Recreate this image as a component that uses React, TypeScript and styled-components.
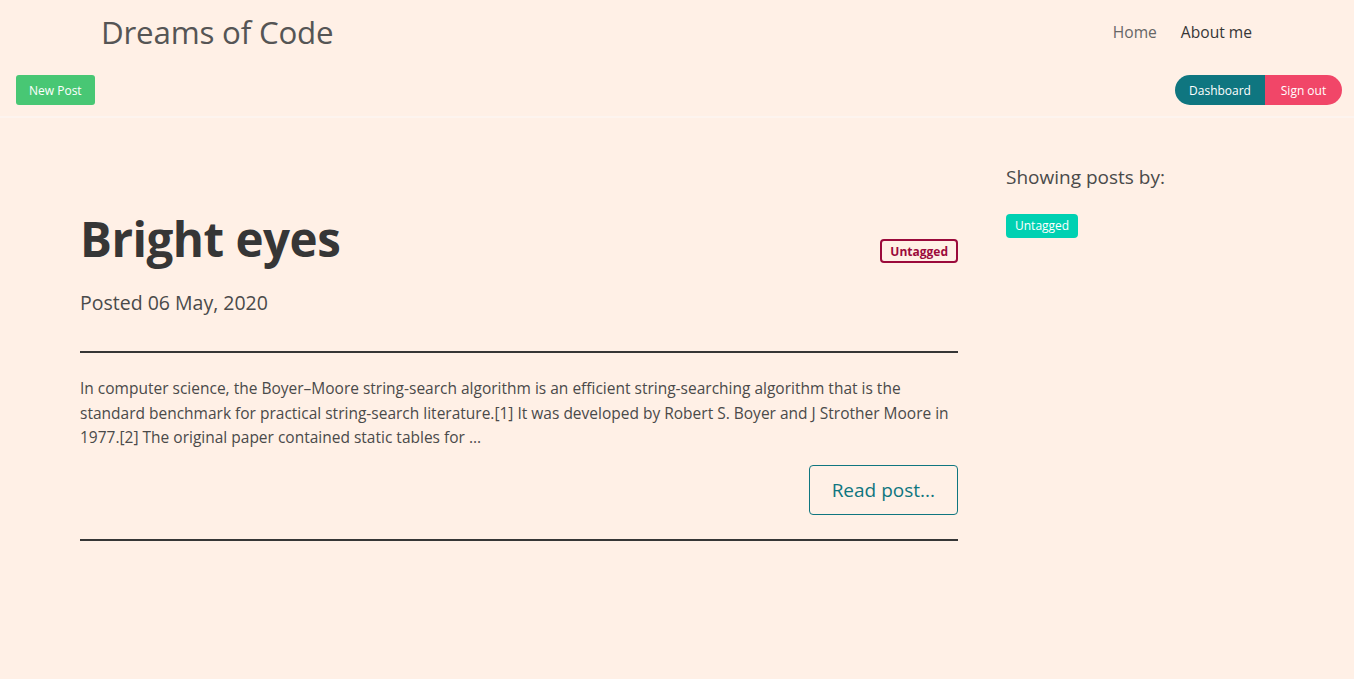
import styled, { createGlobalStyle } from "styled-components";

const GlobalStyle = createGlobalStyle`
  html, body {
    margin: 0;
    padding: 0;
    background-color: #fff0e6;
  }
  body {
    font-family: "Open Sans", "Noto Sans", sans-serif;
    color: #4a4a4a;
  }
  * {
    box-sizing: border-box;
  }
`;

const Page = styled.div`
  min-height: 679px;
  background-color: #fff0e6;
`;

// top bar with the site name and links
const Header = styled.header`
  border-bottom: 2px solid #fdf4ef;
`;

const TopRow = styled.div`
  height: 66px;
  display: flex;
  align-items: center;
  justify-content: space-between;
  padding: 0 102px 3px 101px;
`;

const Brand = styled.h1`
  margin: 0;
  font-size: 31.3px;
  font-weight: 400;
  color: #555555;
  letter-spacing: -0.2px;
`;

const Nav = styled.nav`
  display: flex;
  gap: 24px;
  font-size: 15.6px;
`;

const NavLink = styled.a<{ active?: boolean }>`
  color: ${(props) => (props.active ? "#363636" : "#666666")};
  text-decoration: none;
`;

const ToolRow = styled.div`
  height: 50px;
  display: flex;
  align-items: flex-start;
  justify-content: space-between;
  padding: 9px 12px 0 16px;
`;

const SmallButton = styled.button<{ bg: string }>`
  height: 30px;
  border: none;
  color: #fff;
  background-color: ${(props) => props.bg};
  font-family: inherit;
  font-size: 12px;
  padding: 0 13px;
  border-radius: 3px;
`;

const Pill = styled.div`
  display: flex;
  border-radius: 15px;
  overflow: hidden;
`;

const PillButton = styled(SmallButton)`
  border-radius: 0;
  padding: 0 14px;
  min-width: ${(props) => (props.bg === "#0f7680" ? "90px" : "77px")};
`;

// post list and side filter
const Body = styled.main`
  display: flex;
  padding: 0 0 0 80px;
  gap: 48px;
`;

const Posts = styled.section`
  width: 878px;
  padding-top: 91px;
`;

const PostHead = styled.div`
  display: flex;
  justify-content: space-between;
  align-items: flex-end;
`;

const PostTitle = styled.h2`
  margin: 0;
  font-size: 47.5px;
  line-height: 60px;
  font-weight: 700;
  color: #363636;
  letter-spacing: -0.5px;
`;

const Tag = styled.span<{ outlined?: boolean }>`
  display: inline-flex;
  align-items: center;
  height: 24px;
  padding: 0 ${(props) => (props.outlined ? "8px" : "9px")};
  border-radius: 4px;
  font-size: 12px;
  font-weight: ${(props) => (props.outlined ? 700 : 400)};
  color: ${(props) => (props.outlined ? "#9b0a3b" : "#fff")};
  background-color: ${(props) => (props.outlined ? "transparent" : "#00d1b2")};
  border: ${(props) => (props.outlined ? "2px solid #9b0a3b" : "none")};
  margin-bottom: ${(props) => (props.outlined ? "6px" : "0")};
`;

const PostedDate = styled.p`
  margin: 20px 0 0;
  font-size: 19.5px;
  color: #4a4a4a;
`;

const Rule = styled.hr`
  margin: 0;
  border: none;
  border-top: 2px solid #363636;
`;

const FirstRule = styled(Rule)`
  margin-top: 35px;
`;

const Excerpt = styled.p`
  margin: 23px 0 0;
  font-size: 15.5px;
  line-height: 24.5px;
  color: #4a4a4a;
`;

const ReadRow = styled.div`
  display: flex;
  justify-content: flex-end;
  margin: 15px 0 24px;
`;

const ReadButton = styled.button`
  height: 50px;
  padding: 0 22px;
  border: 1px solid #0f7680;
  border-radius: 4px;
  background: transparent;
  color: #0f7680;
  font-family: inherit;
  font-size: 19px;
`;

const Side = styled.aside`
  padding-top: 46px;
`;

const SideTitle = styled.h3`
  margin: 0 0 23px;
  font-size: 19px;
  font-weight: 400;
  color: #4a4a4a;
`;

export default function App() {
  return (
    <Page>
      <GlobalStyle />
      <Header>
        <TopRow>
          <Brand>Dreams of Code</Brand>
          <Nav>
            <NavLink href="#">Home</NavLink>
            <NavLink href="#" active>
              About me
            </NavLink>
          </Nav>
        </TopRow>
        <ToolRow>
          <SmallButton bg="#48c774">New Post</SmallButton>
          <Pill>
            <PillButton bg="#0f7680">Dashboard</PillButton>
            <PillButton bg="#f14668">Sign out</PillButton>
          </Pill>
        </ToolRow>
      </Header>
      <Body>
        <Posts>
          <PostHead>
            <PostTitle>Bright eyes</PostTitle>
            <Tag outlined>Untagged</Tag>
          </PostHead>
          <PostedDate>Posted 06 May, 2020</PostedDate>
          <FirstRule />
          <Excerpt>
            In computer science, the Boyer–Moore string-search algorithm is an efficient string-searching algorithm that
            is the standard benchmark for practical string-search literature.[1] It was developed by Robert S. Boyer and J
            Strother Moore in 1977.[2] The original paper contained static tables for ...
          </Excerpt>
          <ReadRow>
            <ReadButton>Read post...</ReadButton>
          </ReadRow>
          <Rule />
        </Posts>
        <Side>
          <SideTitle>Showing posts by:</SideTitle>
          <Tag>Untagged</Tag>
        </Side>
      </Body>
    </Page>
  );
}
